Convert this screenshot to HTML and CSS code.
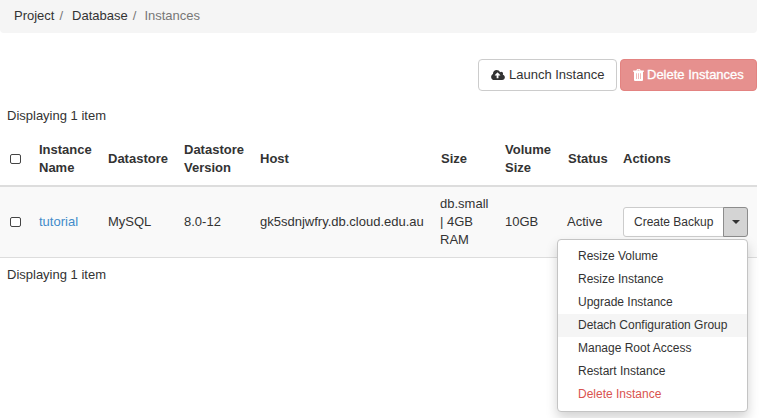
FILE: index.html
```html
<!DOCTYPE html>
<html lang="en">
<head>
<meta charset="utf-8">
<title>Instances</title>
<link rel="stylesheet" href="styles.css">
</head>
<body>
<div class="page">
  <nav class="breadcrumb"><span>Project</span><i>/</i><span>Database</span><i class="last">/</i><span class="current">Instances</span></nav>
  <div class="toolbar">
    <button class="btn launch"><svg class="cloud" viewBox="0 0 1920 1536"><path fill-rule="evenodd" d="M1280 736q0-14-9-23L919 361q-9-9-23-9t-23 9L522 712q-10 12-10 24 0 14 9 23t23 9h224v352q0 13 9.500 22.500t22.500 9.500h192q13 0 22.500-9.500t9.500-22.500V768h224q13 0 22.500-9.500t9.500-22.500zM1920 1024q0 159-112.500 271.500T1536 1408H448q-185 0-316.500-131.500T0 960q0-130 70-240t188-165q-2-30-2-43 0-212 150-362T768 0q156 0 285.500 87T1242 318q71-62 166-62 106 0 181 75t75 181q0 76-41 138 130 31 213.500 135.500T1920 1024z"/></svg><span>Launch Instance</span></button>
    <button class="btn danger" disabled><svg class="trash" viewBox="0 0 11 12"><path fill-rule="evenodd" d="M3.400 1.500 3.900.3Q4.100 0 4.500 0h2q.4 0 .6.300l.5 1.200H10.500q.5 0 .5.500v.8H10V10.800Q10 12 9 12H2Q1 12 1 10.800V2.800H0V2q0-.5.5-.5zM4.500 1.500h2L6.200.8H4.800zM3 4.200v5.800h.6V4.200zm2.200 0v5.800h.6V4.200zM7.400 4.200v5.800h.6V4.200z"/></svg><span>Delete Instances</span></button>
  </div>
  <div class="count">Displaying 1 item</div>
  <table>
    <colgroup><col class="c-check"><col class="c-name"><col class="c-store"><col class="c-version"><col class="c-host"><col class="c-size"><col class="c-volume"><col class="c-status"><col></colgroup>
    <thead><tr><th><span class="check"></span></th><th>Instance Name</th><th>Datastore</th><th>Datastore Version</th><th>Host</th><th class="inset">Size</th><th>Volume Size</th><th class="inset">Status</th><th>Actions</th></tr></thead>
    <tbody><tr><td><span class="check"></span></td><td><a>tutorial</a></td><td>MySQL</td><td>8.0-12</td><td>gk5sdnjwfry.db.cloud.edu.au</td><td>db.small | 4GB RAM</td><td>10GB</td><td>Active</td>
      <td><div class="group"><button class="backup">Create Backup</button><button class="toggle"><span class="caret"></span></button>
        <ul class="menu"><li>Resize Volume</li><li>Resize Instance</li><li>Upgrade Instance</li><li class="hover">Detach Configuration Group</li><li>Manage Root Access</li><li>Restart Instance</li><li class="delete">Delete Instance</li></ul>
      </div></td></tr></tbody>
  </table>
  <div class="count foot">Displaying 1 item</div>
</div>
</body>
</html>
```
FILE: styles.css
```css
* { box-sizing: border-box; }
body { margin: 0; background: #fff; color: #333; font: 13px/18px "Liberation Sans", Arial, sans-serif; overflow: hidden; }
button { font: inherit; color: inherit; margin: 0; }
.page { width: 757px; height: 418px; }
.breadcrumb { display: flex; height: 33px; padding: 7px 14px; background: #f5f5f5; border-radius: 0 0 4px 4px; }
.breadcrumb i { font-style: normal; color: #777; padding: 0 9px 0 5px; }
.breadcrumb .last { padding-right: 8px; }
.breadcrumb .current { color: #777; }
.toolbar { display: flex; justify-content: flex-end; gap: 3px; margin-top: 26px; }
.btn { display: flex; align-items: center; height: 32px; padding: 0 12px; border: 1px solid #ccc; border-radius: 4px; background: #fff; white-space: nowrap; }
.launch { width: 139px; }
.danger { width: 137px; background: #e6908e; border-color: #e38381; color: #fff; -webkit-text-stroke: .3px #fff; }
.btn svg { fill: currentColor; flex: none; }
.btn span { margin-left: 1px; }
.cloud { width: 14px; height: 11px; margin-right: 3px; }
.trash { width: 11px; height: 12px; margin-right: 2px; }
.count { padding: 0 7px; margin-top: 16px; height: 18px; }
table { width: 757px; table-layout: fixed; border-collapse: separate; border-spacing: 0; margin-top: 8px; }
.c-check { width: 31px; }
.c-name { width: 69px; }
.c-store { width: 76px; }
.c-version { width: 76px; }
.c-host { width: 180px; }
.c-size { width: 65px; }
.c-volume { width: 62px; }
.c-status { width: 56px; }
th, td { padding: 8px; text-align: left; vertical-align: middle; }
th { height: 54px; border-bottom: 2px solid #ddd; }
th.inset { padding-left: 9px; padding-right: 7px; }
td { height: 71px; background: #f9f9f9; border-bottom: 1px solid #ddd; }
a { color: #428bca; }
.check { display: block; width: 11px; height: 10px; margin: 0 0 0 2px; border: 1px solid #444; border-radius: 2px; background: #fff; }
.group { position: relative; display: flex; width: 125px; font-size: 12px; }
.backup { width: 101px; height: 30px; padding: 0 0 0 10px; text-align: left; white-space: nowrap; background: #fff; border: 1px solid #ccc; border-radius: 3px 0 0 3px; }
.toggle { display: flex; align-items: center; justify-content: center; width: 25px; height: 30px; margin-left: -1px; padding: 0; background: #d4d4d4; border: 1px solid #8c8c8c; border-radius: 0 3px 3px 0; }
.caret { border: 4px solid transparent; border-top-color: #333; border-bottom: 0; }
.menu { position: absolute; z-index: 1; top: 32px; right: 0; width: 191px; height: 173px; margin: 0; padding: 5px 0; list-style: none; background: #fff; border: 1px solid #c4c4c4; border-radius: 4px; box-shadow: 0 6px 12px rgba(0,0,0,.175); }
.menu li { height: 23px; padding: 0 20px; line-height: 23px; white-space: nowrap; }
.menu .hover { background: #f5f5f5; }
.menu .delete { color: #d9534f; }
.foot { margin-top: 8px; }
```
